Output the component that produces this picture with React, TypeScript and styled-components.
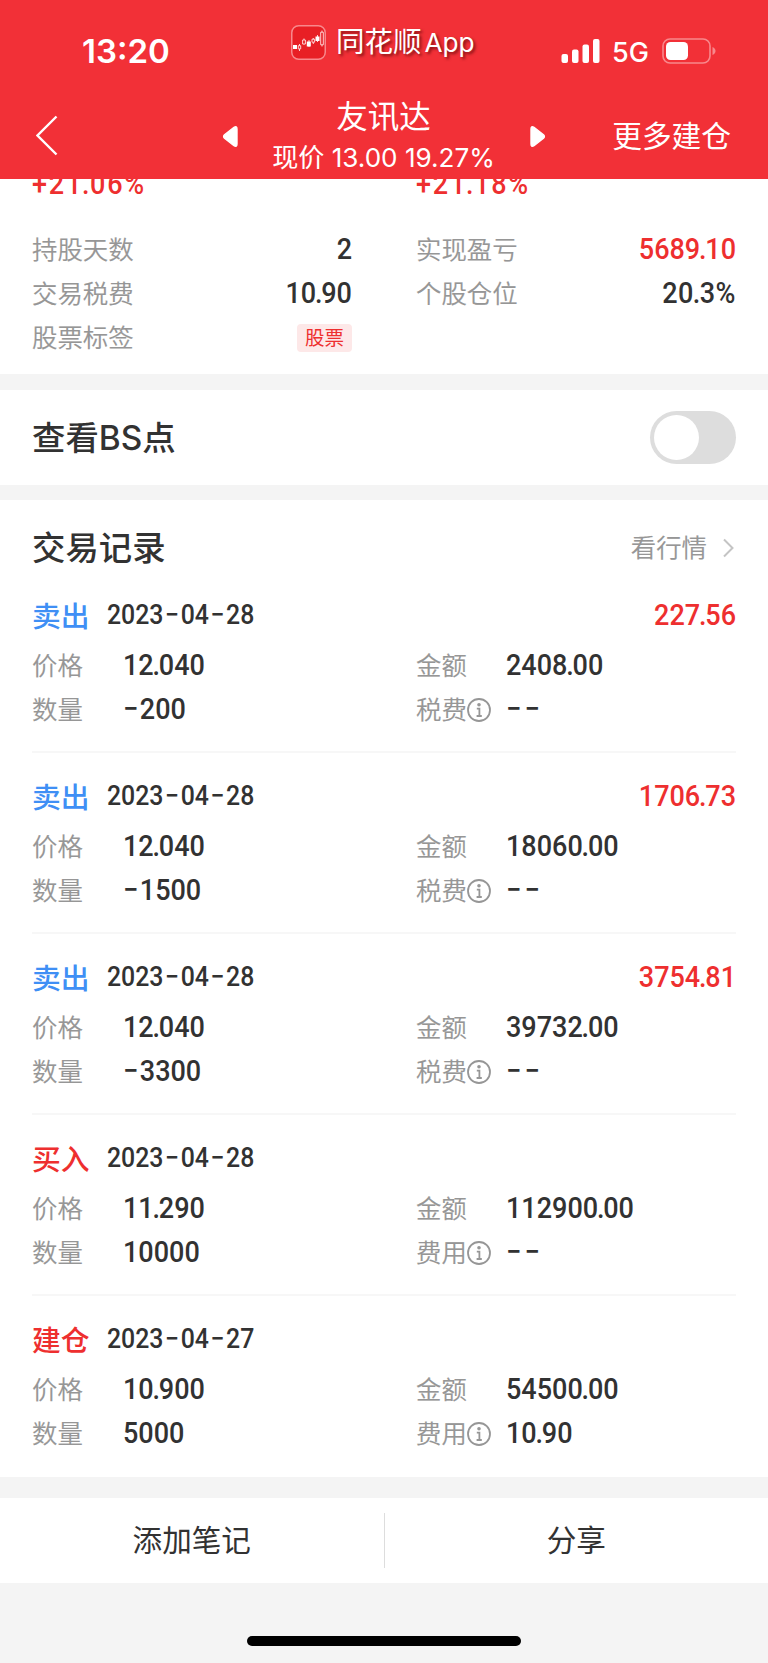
import React from "react";
import styled, { createGlobalStyle } from "styled-components";

const cjk = `"Noto Sans CJK SC", sans-serif`;
const RED = "#f23037";
const VALUE_RED = "#ee2f2f";
const INK = "#323232";
const MUTED = "#969696";

const GlobalStyle = createGlobalStyle`
  * { box-sizing: border-box; }
  body { margin: 0; background: #f4f4f4; font-family: Inter, ${cjk}; color: ${INK}; }
`;

const Screen = styled.div`
  width: 768px;
  height: 1663px;
  display: flex;
  flex-direction: column;
  background: #f4f4f4;
  overflow: hidden;
  white-space: nowrap;
`;

const Header = styled.header`
  height: 179px;
  flex: none;
  background: ${RED};
  color: #fff;
`;

const StatusBar = styled.div`
  height: 94px;
  display: grid;
  grid-template-columns: 291px 1fr 207px;
`;

const Clock = styled.div`
  padding: 30px 0 0 82px;
  font-size: 33px;
  line-height: 42px;
  font-weight: 600;
`;

const AppBadge = styled.div`
  display: flex;
  align-items: center;
  gap: 10px;
  height: 36px;
  margin-top: 24px;
`;

const AppName = styled.div`
  font-size: 28.5px;
  line-height: 36px;
  text-shadow: 2px 2px 3px rgba(70, 0, 0, 0.65);
  span { font-size: 26.2px; margin-left: 3px; }
`;

const Signals = styled.div`
  display: flex;
  align-items: center;
  height: 26px;
  margin-top: 38px;
`;

const Network = styled.span`
  font-size: 27px;
  line-height: 26px;
  font-weight: 500;
  width: 62px;
  padding: 3px 0 0 12px;
`;

const NavBar = styled.nav`
  height: 85px;
  display: grid;
  grid-template-columns: 36px 186px 1fr 222px;
`;

const BackIcon = styled.svg`
  grid-column: 2;
  margin-top: 21px;
`;

const Stepper = styled.div`
  display: flex;
  justify-content: space-between;
  align-items: flex-start;
  > svg { margin-top: 30.5px; }
`;

const TitleBlock = styled.div`
  display: flex;
  flex-direction: column;
  align-items: center;
  padding: 4px 1px 0 0;
`;

const Title = styled.div`
  font-size: 31.5px;
  line-height: 38px;
`;

const Quote = styled.div`
  font-size: 26.1px;
  line-height: 32px;
  margin-top: 6px;
`;

const MoreButton = styled.div`
  padding: 22px 37px 0 0;
  text-align: right;
  font-size: 29.7px;
  line-height: 40px;
`;

const Panel = styled.section<{ $h: number; $gap?: number }>`
  height: ${(p) => p.$h}px;
  margin-bottom: ${(p) => p.$gap ?? 0}px;
  flex: none;
  background: #fff;
  padding: 0 32px;
  overflow: hidden;
`;

const Columns = styled.div`
  display: grid;
  grid-template-columns: 320px 320px;
  column-gap: 64px;
`;

/* Tighter decimal points and roomier minus signs than the typeface gives. */
const Point = styled.span`
  margin: 0 -1.3px;
`;

const Minus = styled.span<{ $leading: boolean }>`
  margin: 0 1.8px 0 ${(p) => (p.$leading ? 0 : 1.8)}px;
`;

const FigureText = styled.span<{ $tone?: string; $size?: number; $track?: number; $from?: "left" | "right" }>`
  display: inline-block;
  font-family: Roboto, ${cjk};
  font-size: ${(p) => p.$size ?? 30}px;
  line-height: 42px;
  height: 44px;
  font-weight: 500;
  letter-spacing: ${(p) => p.$track ?? 0}px;
  color: ${(p) => p.$tone ?? INK};
  transform: scaleX(0.9);
  transform-origin: ${(p) => p.$from ?? "left"} center;
`;

type FigureProps = {
  children: string;
  tone?: string;
  size?: number;
  track?: number;
  from?: "left" | "right";
};

const Figure = ({ children, tone, size, track, from }: FigureProps) => (
  <FigureText $tone={tone} $size={size} $track={track} $from={from}>
    {children
      .split(/([.−])/)
      .filter(Boolean)
      .map((part, i) => {
        if (part === ".") return <Point key={i}>.</Point>;
        if (part === "−") return <Minus key={i} $leading={i === 0}>−</Minus>;
        return part;
      })}
  </FigureText>
);

const RateRow = styled(Columns)`
  height: 49px;
  > span { margin-top: -16px; }
`;

const Stat = styled.div`
  display: flex;
  justify-content: space-between;
  align-items: center;
  height: 44px;
`;

const Label = styled.span`
  display: inline-flex;
  align-items: center;
  font-size: 25.4px;
  line-height: 44px;
  font-weight: 350;
  -webkit-text-stroke: 0.15px ${MUTED};
  color: ${MUTED};
`;

const Tag = styled.span`
  width: 55px;
  height: 28px;
  border-radius: 4px;
  background: #fde8e8;
  color: ${VALUE_RED};
  font-size: 19.5px;
  line-height: 28px;
  text-align: center;
`;

const SwitchRow = styled.div`
  height: 95px;
  display: flex;
  align-items: center;
  justify-content: space-between;
`;

const Heading = styled.h2`
  margin: 0;
  font-size: 33.4px;
  line-height: 44px;
  font-weight: 500;
`;

const Switch = styled.div`
  width: 86px;
  height: 53px;
  border-radius: 27px;
  padding: 4px;
  background: #ddd;
  &::after {
    content: "";
    display: block;
    width: 45px;
    height: 45px;
    border-radius: 50%;
    background: #fff;
  }
`;

const RecordsHead = styled.div`
  display: flex;
  justify-content: space-between;
  align-items: center;
  height: 72px;
  padding-top: 24px;
`;

const MarketLink = styled.span`
  display: flex;
  align-items: center;
  gap: 15px;
`;

const Record = styled.article`
  height: 181px;
  padding-top: 22px;
  border-bottom: 2px solid #f7f7f7;
  &:last-child { border-bottom: 0; }
`;

const RecordHead = styled.div`
  display: flex;
  align-items: center;
  height: 44px;
  margin-bottom: 6px;
`;

const Action = styled.span<{ $buy: boolean }>`
  width: 75px;
  padding-top: 1px;
  font-size: 28.8px;
  line-height: 44px;
  font-weight: 500;
  color: ${(p) => (p.$buy ? VALUE_RED : "#3f8ff5")};
`;

const Profit = styled.div`
  display: flex;
  margin-left: auto;
`;

const Field = styled.div<{ $w: number }>`
  display: grid;
  grid-template-columns: ${(p) => p.$w}px 1fr;
  justify-items: start;
  height: 44px;
`;

const Footer = styled.footer`
  height: 85px;
  flex: none;
  background: #fff;
  display: flex;
  align-items: center;
`;

const FooterAction = styled.div`
  flex: 1;
  text-align: center;
  font-size: 29.6px;
  line-height: 55px;
  & + & { border-left: 1px solid #ddd; }
`;

const HomeArea = styled.div`
  flex: 1;
  display: flex;
  justify-content: center;
  align-items: flex-end;
  padding-bottom: 17px;
`;

const HomeBar = styled.div`
  width: 274px;
  height: 10px;
  border-radius: 5px;
  background: #000;
`;

const AppLogo = () => (
  <svg width="35" height="35" viewBox="0 0 35 35">
    <rect x="0.75" y="0.75" width="33.5" height="33.5" rx="7" fill="#e81f25" stroke="#f8888c" strokeWidth="1.5" />
    <g stroke="#ffe3e3" strokeWidth="0.9" fill="none">
      <path d="M8.5 19v7M13 13.500v6M18 15v7M22.300 13v6M26.500 10v7M31 5.500v16" />
      <path fill="#e81f25" d="M7.300 20.700h2.400v3.200h-2.400zM11.600 15h2.800v4h-2.800zM21 14.200h2.600v3h-2.600zM29.700 7.200h2.600v12.600h-2.600z" />
    </g>
    <path fill="#fff" d="M2 20h4v4h-4zM15.800 16.500h4v5h-4zM24.500 11.500h4v4.500h-4z" />
  </svg>
);

const SignalIcon = () => (
  <svg width="39" height="26" viewBox="0 0 39 26" fill="#fff">
    <rect x="0.500" y="16" width="6.500" height="9" rx="2" />
    <rect x="11" y="11.500" width="6.500" height="13.500" rx="2" />
    <rect x="21.500" y="6.500" width="6.500" height="18.500" rx="2" />
    <rect x="32" y="1" width="6.500" height="24" rx="2" />
  </svg>
);

const BatteryIcon = () => (
  <svg width="55" height="26" viewBox="0 0 55 26">
    <rect x="1" y="1" width="47" height="24" rx="7" fill="none" stroke="#f8888c" strokeWidth="1.6" />
    <rect x="4" y="4" width="22" height="18" rx="4.500" fill="#fff" />
    <path d="M50.500 9c4 1.500 4 6.500 0 8z" fill="#f8888c" />
  </svg>
);

const Triangle = ({ flip }: { flip?: boolean }) => (
  <svg width="17" height="23" viewBox="0 0 17 23">
    <path
      d="M2.500 9.800 12 2.300Q15 .5 15 4V19Q15 22.500 12 20.700L2.500 13.200Q.7 11.500 2.500 9.800Z"
      fill="#fff"
      stroke="#fff"
      strokeWidth="1.4"
      transform={flip ? "translate(17 0) scale(-1 1)" : undefined}
    />
  </svg>
);

const InfoIcon = () => (
  <svg width="24" height="24" viewBox="0 0 24 24" fill="none" stroke={MUTED} strokeWidth="1.8">
    <circle cx="12" cy="12" r="11" />
    <circle cx="12" cy="6.800" r="1.800" fill={MUTED} stroke="none" />
    <path d="M9.800 10.600h2.600v7.200M9.600 18h5.200" />
  </svg>
);

type Trade = {
  action: string;
  date: string;
  profit?: string;
  price: string;
  amount: string;
  count: string;
  feeLabel: string;
  fee: string;
};

const trades: Trade[] = [
  { action: "卖出", date: "2023−04−28", profit: "227.56", price: "12.040", amount: "2408.00", count: "−200", feeLabel: "税费", fee: "−−" },
  { action: "卖出", date: "2023−04−28", profit: "1706.73", price: "12.040", amount: "18060.00", count: "−1500", feeLabel: "税费", fee: "−−" },
  { action: "卖出", date: "2023−04−28", profit: "3754.81", price: "12.040", amount: "39732.00", count: "−3300", feeLabel: "税费", fee: "−−" },
  { action: "买入", date: "2023−04−28", price: "11.290", amount: "112900.00", count: "10000", feeLabel: "费用", fee: "−−" },
  { action: "建仓", date: "2023−04−27", price: "10.900", amount: "54500.00", count: "5000", feeLabel: "费用", fee: "10.90" },
];

const TradeRecord = ({ trade }: { trade: Trade }) => (
  <Record>
    <RecordHead>
      <Action $buy={trade.action !== "卖出"}>{trade.action}</Action>
      <Figure size={27.6}>{trade.date}</Figure>
      {trade.profit && (
        <Profit>
          <Figure tone={VALUE_RED} from="right">{trade.profit}</Figure>
        </Profit>
      )}
    </RecordHead>
    <Columns>
      <Field $w={91}><Label>价格</Label><Figure>{trade.price}</Figure></Field>
      <Field $w={90}><Label>金额</Label><Figure>{trade.amount}</Figure></Field>
      <Field $w={91}><Label>数量</Label><Figure>{trade.count}</Figure></Field>
      <Field $w={90}><Label>{trade.feeLabel}<InfoIcon /></Label><Figure>{trade.fee}</Figure></Field>
    </Columns>
  </Record>
);

export default function App() {
  return (
    <Screen>
      <GlobalStyle />
      <Header>
        <StatusBar>
          <Clock>13:20</Clock>
          <AppBadge>
            <AppLogo />
            <AppName>同花顺<span>App</span></AppName>
          </AppBadge>
          <Signals>
            <SignalIcon />
            <Network>5G</Network>
            <BatteryIcon />
          </Signals>
        </StatusBar>
        <NavBar>
          <BackIcon width="22" height="41" viewBox="0 0 22 41" fill="none" stroke="#fff" strokeWidth="2.400">
            <path d="M20.500 1.500 1.500 20.500l19 19" />
          </BackIcon>
          <Stepper>
            <Triangle />
            <TitleBlock>
              <Title>友讯达</Title>
              <Quote>现价 13.00 19.27%</Quote>
            </TitleBlock>
            <Triangle flip />
          </Stepper>
          <MoreButton>更多建仓</MoreButton>
        </NavBar>
      </Header>

      <Panel $h={195} $gap={16}>
        <RateRow>
          <Figure tone={VALUE_RED} track={2}>+21.06%</Figure>
          <Figure tone={VALUE_RED} track={2}>+21.18%</Figure>
        </RateRow>
        <Columns>
          <Stat><Label>持股天数</Label><Figure from="right">2</Figure></Stat>
          <Stat><Label>实现盈亏</Label><Figure from="right" tone={VALUE_RED}>5689.10</Figure></Stat>
          <Stat><Label>交易税费</Label><Figure from="right">10.90</Figure></Stat>
          <Stat><Label>个股仓位</Label><Figure from="right" track={0.6}>20.3%</Figure></Stat>
          <Stat><Label>股票标签</Label><Tag>股票</Tag></Stat>
        </Columns>
      </Panel>

      <Panel $h={95} $gap={15}>
        <SwitchRow>
          <Heading>查看BS点</Heading>
          <Switch />
        </SwitchRow>
      </Panel>

      <Panel $h={977} $gap={21}>
        <RecordsHead>
          <Heading>交易记录</Heading>
          <MarketLink>
            <Label>看行情</Label>
            <svg width="14" height="20" viewBox="0 0 14 20" fill="none" stroke="#c4c4c4" strokeWidth="2">
              <path d="M2 1.500 10.500 10 2 18.500" />
            </svg>
          </MarketLink>
        </RecordsHead>
        <div>
          {trades.map((trade, i) => (
            <TradeRecord key={i} trade={trade} />
          ))}
        </div>
      </Panel>

      <Footer>
        <FooterAction>添加笔记</FooterAction>
        <FooterAction>分享</FooterAction>
      </Footer>
      <HomeArea>
        <HomeBar />
      </HomeArea>
    </Screen>
  );
}
